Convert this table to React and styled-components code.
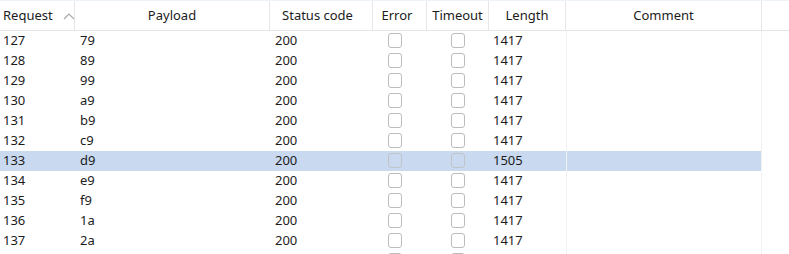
import React from 'react'
import styled, { createGlobalStyle } from 'styled-components'

const GlobalStyle = createGlobalStyle`
    html, body {
        margin: 0;
        padding: 0;
        background: #ffffff;
        overflow: hidden;
    }
    body {
        font-family: "Noto Sans", "Open Sans", sans-serif;
    }
`

const COLUMNS = '75px 195px 103px 54px 62px 77px 196px 27px'

const Table = styled.div`
    width: 789px;
    height: 254px;
    overflow: hidden;
    color: #1c1c1c;
    font-size: 13px;
`

const HeaderRow = styled.div`
    display: grid;
    grid-template-columns: ${COLUMNS};
    height: 29px;
    border-top: 1px solid #eef2f9;
    border-bottom: 1px solid #e4e4e4;
`

const HeaderCell = styled.div`
    display: flex;
    align-items: center;
    justify-content: ${(p) => (p.$left ? 'flex-start' : 'center')};
    gap: 6px;
    padding: ${(p) => (p.$left ? '0 0 0 3px' : `0 ${p.$shift || 0}px 0 0`)};
    border-right: ${(p) => (p.$last ? 'none' : '1px solid #e6e6e6')};
    white-space: nowrap;
    overflow: hidden;
    line-height: 1;
`

const SortArrow = styled.svg`
    width: 12px;
    height: 8px;
    margin-left: 4px;
    flex: none;
`

const Row = styled.div`
    display: grid;
    grid-template-columns: ${COLUMNS};
    height: 20px;
`

const Cell = styled.div`
    display: flex;
    align-items: center;
    padding-left: ${(p) => p.$pad ?? 3}px;
    white-space: nowrap;
    background: ${(p) => (p.$selected ? '#c9daf0' : 'transparent')};
    line-height: 1;
    padding-bottom: 1px;
`

const LinedCell = styled(Cell)`
    border-left: 1px solid #f1f1f1;
    border-right: 1px solid #f1f1f1;
`

const CheckCell = styled(Cell)`
    justify-content: center;
    padding-left: 0;
    padding-right: ${(p) => p.$shift || 0}px;
`

const Box = styled.span`
    display: block;
    width: 14px;
    height: 15px;
    border: 1.5px solid #bcbcbc;
    border-radius: 3px;
    box-sizing: border-box;
    opacity: ${(p) => (p.$dim ? 0.75 : 1)};
`

const rows = [
    [127, '79', 1417],
    [128, '89', 1417],
    [129, '99', 1417],
    [130, 'a9', 1417],
    [131, 'b9', 1417],
    [132, 'c9', 1417],
    [133, 'd9', 1505],
    [134, 'e9', 1417],
    [135, 'f9', 1417],
    [136, '1a', 1417],
    [137, '2a', 1417],
]

export default function App() {
    return (
        <>
            <GlobalStyle />
            <Table>
                <HeaderRow>
                    <HeaderCell $left>
                        Request
                        <SortArrow viewBox="0 0 12 8">
                            <path d="M1 7 L6 2 L11 7" fill="none" stroke="#a8a8a8" strokeWidth="1.2" />
                        </SortArrow>
                    </HeaderCell>
                    <HeaderCell>Payload</HeaderCell>
                    <HeaderCell $shift={7}>Status code</HeaderCell>
                    <HeaderCell $shift={5}>Error</HeaderCell>
                    <HeaderCell>Timeout</HeaderCell>
                    <HeaderCell>Length</HeaderCell>
                    <HeaderCell>Comment</HeaderCell>
                    <HeaderCell $last />
                </HeaderRow>

                {rows.map(([req, payload, length]) => {
                    const sel = req === 133
                    return (
                        <Row key={req}>
                            <Cell $selected={sel}>{req}</Cell>
                            <Cell $selected={sel} $pad={5}>{payload}</Cell>
                            <Cell $selected={sel} $pad={5}>{200}</Cell>
                            <CheckCell $selected={sel} $shift={10}><Box $dim={sel} /></CheckCell>
                            <CheckCell $selected={sel}><Box $dim={sel} /></CheckCell>
                            <Cell $selected={sel} $pad={4}>{length}</Cell>
                            <LinedCell $selected={sel} />
                            <Cell />
                        </Row>
                    )
                })}

                {/* next row is only peeking in at the bottom edge */}
                <Row>
                    <Cell />
                    <Cell />
                    <Cell />
                    <CheckCell $shift={10}><Box /></CheckCell>
                    <CheckCell><Box /></CheckCell>
                    <Cell />
                    <LinedCell />
                    <Cell />
                </Row>
            </Table>
        </>
    )
}
